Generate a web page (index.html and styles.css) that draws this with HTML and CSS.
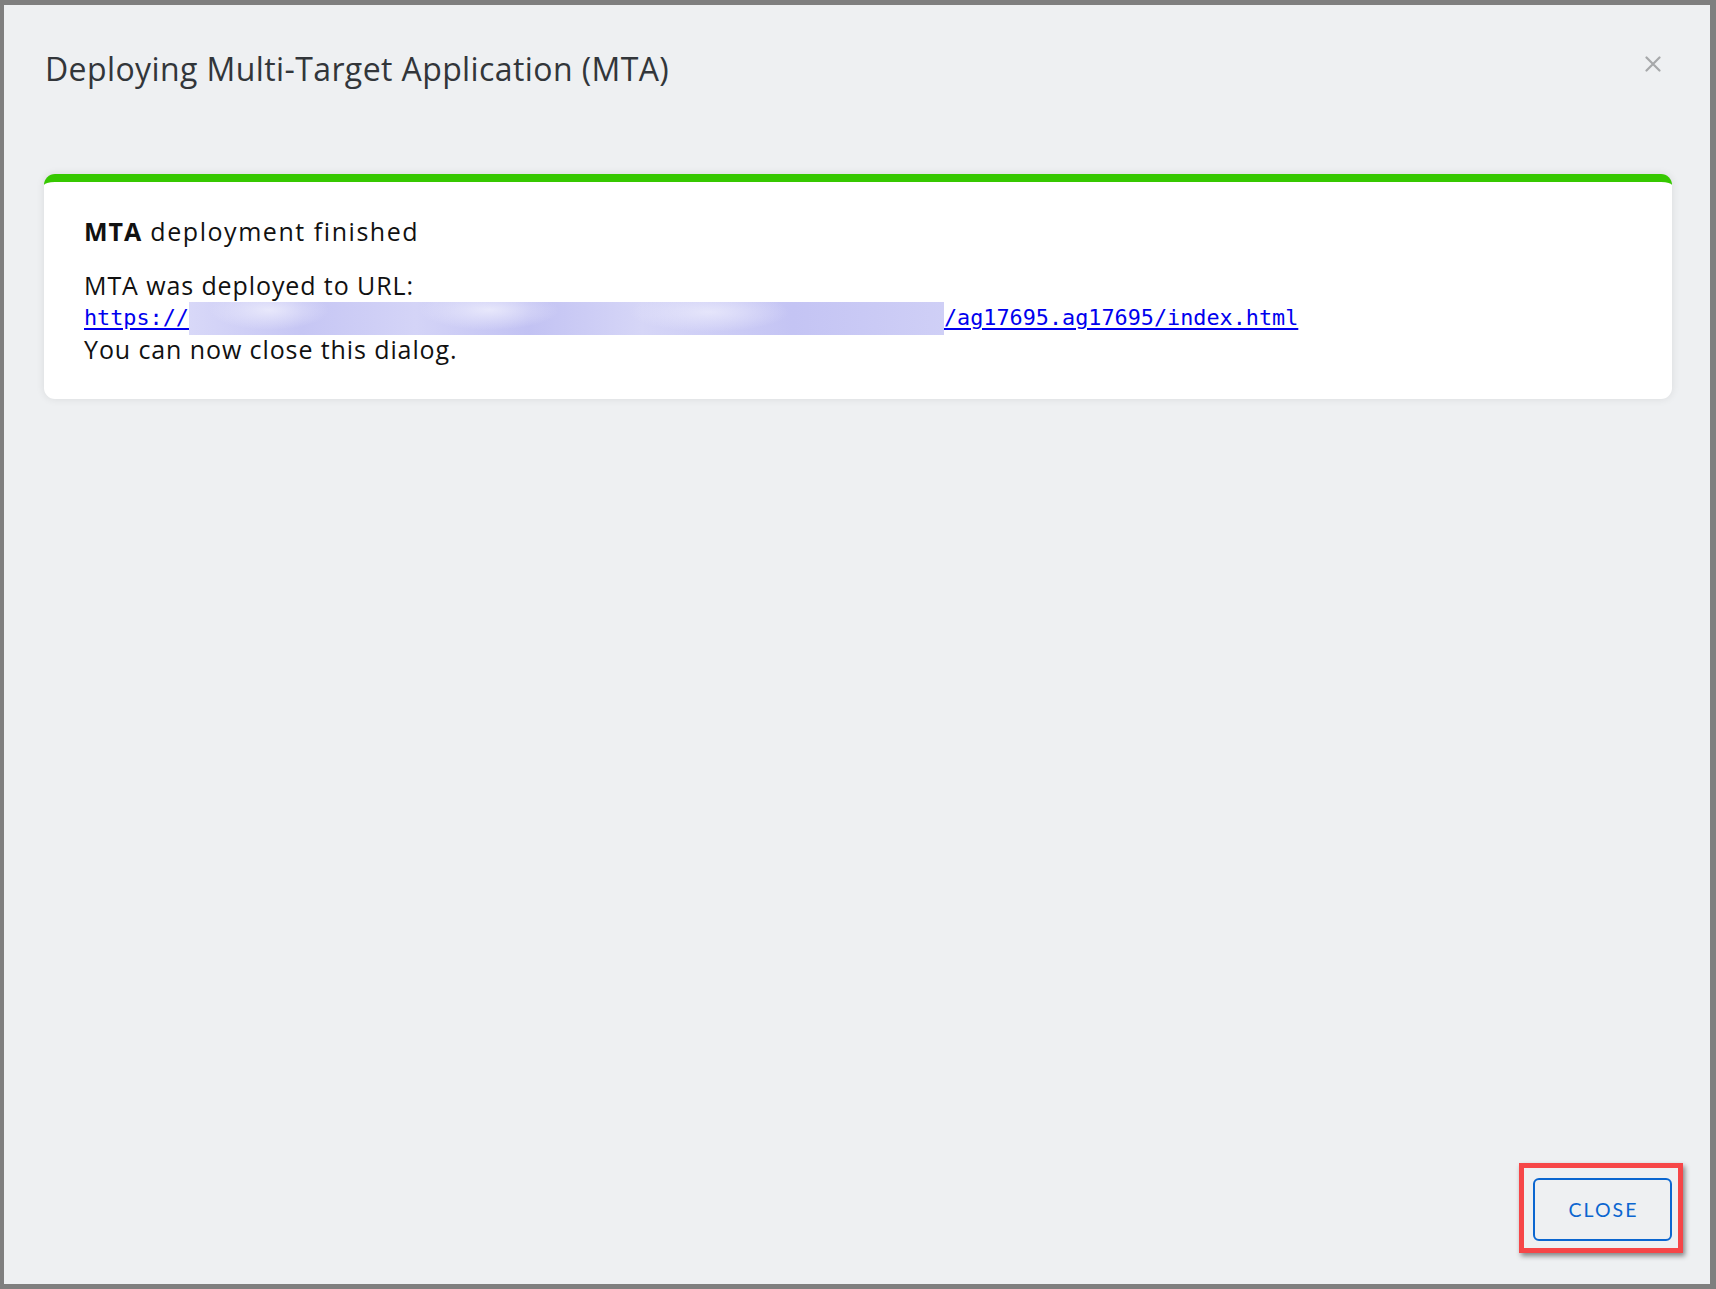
FILE: index.html
```html
<!DOCTYPE html>
<html>
<head>
<meta charset="utf-8">
<title>Deploying Multi-Target Application (MTA)</title>
<link rel="stylesheet" href="styles.css">
</head>
<body>
<div class="dialog">
  <header class="dialog-header">
    <h1 class="dialog-title">Deploying Multi-Target Application (MTA)</h1>
    <button class="dialog-x" aria-label="Close">
      <svg width="16" height="16" viewBox="0 0 16 16"><path d="M1.5 1.5 L14.5 14.5 M14.5 1.5 L1.5 14.5" stroke="#a6a8aa" stroke-width="2.2" stroke-linecap="round" fill="none"/></svg>
    </button>
  </header>
  <section class="card">
    <h2 class="card-title"><b>MTA</b> deployment finished</h2>
    <div class="card-body">
      <div class="line">MTA was deployed to URL:</div>
      <div class="line"><a class="url" href="#">https://<span class="blur"></span>/ag17695.ag17695/index.html</a></div>
      <div class="line">You can now close this dialog.</div>
    </div>
  </section>
  <div class="spacer"></div>
  <footer class="dialog-footer">
    <div class="btn-wrap">
      <button class="btn-close">CLOSE</button>
      <span class="highlight"></span>
    </div>
  </footer>
</div>
</body>
</html>
```
FILE: styles.css
```css
html, body {
  margin: 0;
  padding: 0;
}
body {
  background: #7f7f7f;
  width: 1716px;
  height: 1289px;
  overflow: hidden;
  font-family: "Open Sans", Lato, sans-serif;
}
.dialog {
  margin: 5px 6px 0 4px;
  height: 1279px;
  box-sizing: border-box;
  background: #eef0f2;
  display: flex;
  flex-direction: column;
  padding: 44px 38px 43px 40px;
}
.dialog-header {
  display: flex;
  justify-content: space-between;
  align-items: flex-start;
  padding-left: 1px;
}
.dialog-title {
  margin: 0;
  font-weight: 400;
  font-size: 32px;
  line-height: 40px;
  letter-spacing: 0.4px;
  color: #32363a;
}
.dialog-x {
  border: 0;
  background: none;
  padding: 0;
  margin: 7px 11px 0 0;
  width: 16px;
  height: 16px;
  display: block;
}
.dialog-x svg { display: block; }
.card {
  margin-top: 85px;
  background: #fff;
  border-top: 8px solid #36c800;
  border-radius: 11px;
  box-shadow: 0 0 8px rgba(0, 0, 0, 0.09);
  padding: 34px 40px 34px 40px;
  color: #111;
}
.card-title {
  margin: 0;
  font-size: 25px;
  line-height: 30px;
  font-weight: 500;
  letter-spacing: 1.55px;
  color: #111;
}
.card-title b { font-weight: 700; letter-spacing: 1px; }
.card-body {
  margin-top: 23px;
  font-size: 25px;
  line-height: 32px;
  letter-spacing: 0.9px;
}
.line {
  height: 32px;
  white-space: nowrap;
}
.url {
  font-family: "DejaVu Sans Mono", "Liberation Mono", monospace;
  font-size: 21.8px;
  line-height: 32px;
  letter-spacing: 0;
  color: #0000ee;
  text-decoration: underline;
  text-underline-offset: 3px;
  position: relative;
  top: -2px;
}
.blur {
  display: inline-block;
  width: 755px;
  height: 33px;
  vertical-align: top;
  margin-top: 3px;
  background:
    radial-gradient(ellipse 60px 20px at 80px 8px, rgba(235,235,252,0.9), rgba(235,235,252,0)),
    radial-gradient(ellipse 70px 20px at 300px 8px, rgba(235,235,252,0.9), rgba(235,235,252,0)),
    radial-gradient(ellipse 80px 20px at 520px 10px, rgba(235,235,252,0.8), rgba(235,235,252,0)),
    linear-gradient(90deg, #d8d8f8 0%, #c6c6f4 15%, #d4d4f7 30%, #c2c2f3 45%, #d6d6f7 60%, #c4c4f4 80%, #cfcff6 100%);
}
.spacer { flex: 1; }
.dialog-footer {
  display: flex;
  justify-content: flex-end;
}
.btn-wrap {
  position: relative;
}
.btn-close {
  display: block;
  width: 139px;
  height: 63px;
  box-sizing: border-box;
  border: 2px solid #0b66d0;
  border-radius: 6px;
  background: transparent;
  color: #0b66d0;
  font-family: Lato, "Open Sans", sans-serif;
  font-size: 19.5px;
  letter-spacing: 2px;
  padding: 0 0 0 2px;
}
.highlight {
  position: absolute;
  left: -14px;
  top: -15px;
  right: -11px;
  bottom: -12px;
  border: 5px solid #f64648;
  box-shadow: 2px 3px 5px rgba(0, 0, 0, 0.45);
  pointer-events: none;
}
```
